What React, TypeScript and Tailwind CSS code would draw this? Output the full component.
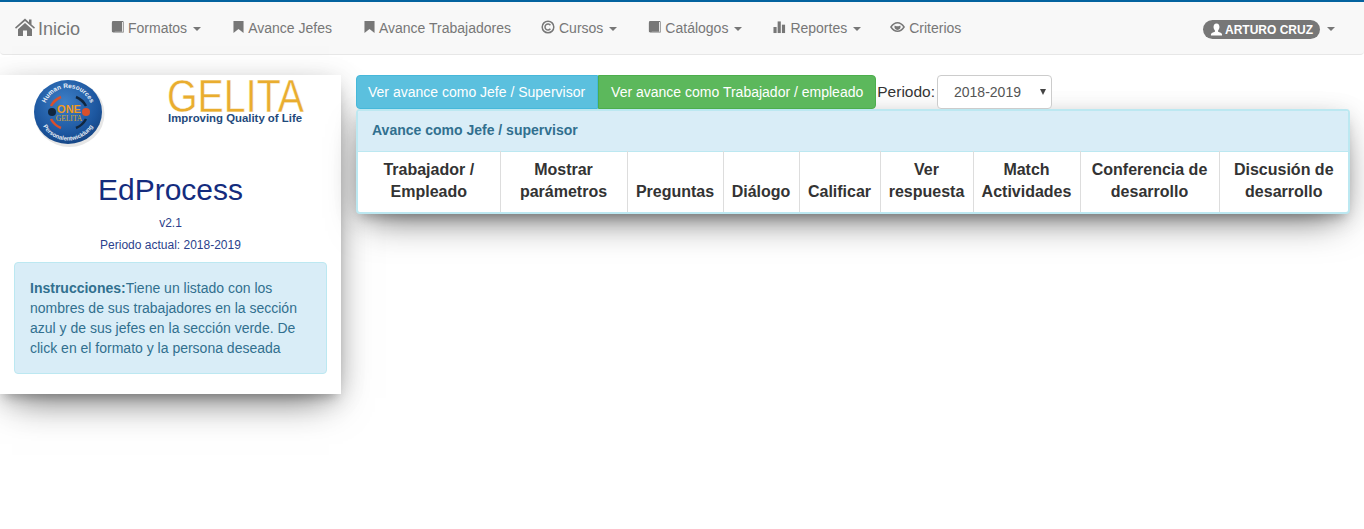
import React from "react";

const Caret = () => (
  <span className="ml-[6px] inline-block h-0 w-0 border-x-4 border-t-4 border-x-transparent border-t-[#777] align-middle" />
);

const Book = () => (
  <svg viewBox="0 0 14 14" className="mr-[4px] inline-block h-[14px] w-[13px] align-[-1px]" fill="#777">
    <path d="M3 0.5h10v1H4v10.5h9v-11h0.7V13H3.2C1.8 13 1 12.2 1 11V2.5C1 1.2 1.8 0.5 3 0.5z" />
    <path d="M1 2.5C1 1.2 1.8.6 3 .6h9V12H3c-1 0-2 .3-2 1z" />
  </svg>
);
const Mark = () => (
  <svg viewBox="0 0 12 14" className="mr-[4px] inline-block h-[14px] w-[11px] align-[-1px]" fill="#777">
    <path d="M0.5 0.5h11v13L6 9.2 0.5 13.500z" />
  </svg>
);
const Copy = () => (
  <svg viewBox="0 0 14 14" className="mr-[4px] inline-block h-[14px] w-[14px] align-[-1px]" fill="none" stroke="#777">
    <circle cx="7" cy="7" r="5.8" strokeWidth="1.5" />
    <path d="M9.4 5.2A3 3 0 1 0 9.4 8.8" strokeWidth="1.5" />
  </svg>
);
const Bars = () => (
  <svg viewBox="0 0 14 14" className="mr-[4px] inline-block h-[14px] w-[13px] align-[-1px]" fill="#777">
    <rect x="0.5" y="7" width="3.4" height="6.5" />
    <rect x="5" y="1" width="3.4" height="12.5" />
    <rect x="9.6" y="4.5" width="3.4" height="9" />
  </svg>
);
const Eye = () => (
  <svg viewBox="0 0 16 14" className="mr-[4px] inline-block h-[14px] w-[15px] align-[-1px]" fill="none" stroke="#777">
    <path d="M1 7c2-3 4.300-4.500 7-4.500S13 4 15 7c-2 3-4.300 4.500-7 4.500S3 10 1 7z" strokeWidth="1.6" />
    <path d="M5 5.500a3.300 3.300 0 1 0 6 0c-1 1-5 1-6 0z" fill="#777" stroke="none" />
  </svg>
);
const Home = () => (
  <svg viewBox="0 0 20 18" className="mr-[3px] inline-block h-[18px] w-[20px] align-[-1px]" fill="#777">
    <path d="M10 0.500 0 9.500l1 1.200L10 3l9 7.700 1-1.200-3.500-3V1.500h-2.500v2.800z" />
    <path d="M3 11.300 10 5l7 6.300V18h-5v-5.500H8V18H3z" />
  </svg>
);
const User = () => (
  <svg viewBox="0 0 14 14" className="mr-[2px] inline-block h-[13px] w-[13px] align-[-2px]" fill="#fff">
    <path d="M7 0.500c2.200 0 3.200 1.700 3.200 3.800 0 1.700-.8 3-1.500 3.700v1.300c1.800.6 4.300 1.300 4.300 3.200V13.500H1v-1c0-1.900 2.500-2.600 4.300-3.200V8C4.600 7.300 3.800 6 3.800 4.300 3.800 2.200 4.800 0.500 7 0.500z" />
  </svg>
);

const Item = ({ icon, label, caret, pad = "pr-[15px]" }: { icon: React.ReactNode; label: string; caret?: boolean; pad?: string }) => (
  <a className={`block whitespace-nowrap pl-[15px] text-[14px] leading-[20px] text-[#777] ${pad}`}>
    {icon}
    {label}
    {caret && <Caret />}
  </a>
);

const OneLogo = () => (
  <svg viewBox="0 0 72 70" className="h-[70px] w-[72px]">
    <defs>
      <radialGradient id="blue" cx="45%" cy="35%" r="70%">
        <stop offset="0%" stopColor="#3d7fc7" />
        <stop offset="70%" stopColor="#1c569f" />
        <stop offset="100%" stopColor="#14427f" />
      </radialGradient>
      <path id="arcTop" d="M11 33a24 24 0 0 1 48 0" />
      <path id="arcBot" d="M6 33a29 28.500 0 0 0 58 0" />
    </defs>
    <ellipse cx="36.500" cy="35" rx="35" ry="33" fill="#d5d5d5" opacity="0.6" />
    <ellipse cx="35" cy="33" rx="34" ry="32" fill="url(#blue)" />
    <text fontFamily="'Liberation Sans', Arial, sans-serif" fontSize="6.500" fontWeight="700" fill="#fff" opacity="0.9">
      <textPath href="#arcTop" startOffset="50%" textAnchor="middle">Human Resources</textPath>
    </text>
    <text fontFamily="'Liberation Sans', Arial, sans-serif" fontSize="6" fontWeight="700" fill="#fff" opacity="0.9">
      <textPath href="#arcBot" startOffset="50%" textAnchor="middle">Personalentwicklung</textPath>
    </text>
    <path d="M18 27a20 20 0 0 1 10-9M18 40a20 20 0 0 0 10 9" fill="none" stroke="#d9502c" strokeWidth="2.500" />
    <path d="M43 18a20 20 0 0 1 10 9M43 49a20 20 0 0 0 10-9" fill="none" stroke="#10263f" strokeWidth="2.500" />
    <circle cx="19" cy="33" r="4" fill="#10263f" />
    <circle cx="53" cy="33" r="4" fill="#d9502c" />
    <text x="36" y="34" textAnchor="middle" fontFamily="'Liberation Sans', Arial, sans-serif" fontSize="11" fontWeight="700" fill="#f39a1c">ONE</text>
    <text x="36" y="42" textAnchor="middle" fontFamily="'Liberation Serif', serif" fontSize="7.500" fill="#d9a632">GELITA</text>
  </svg>
);

const GelitaLogo = () => (
  <svg viewBox="0 0 136 48" className="h-[48px] w-[136px] overflow-visible">
    <text x="-2" y="33" fontFamily="'Liberation Sans', Arial, sans-serif" fontSize="46" fill="#e9ad2f" stroke="#fff" strokeWidth="0.4" textLength="137" lengthAdjust="spacingAndGlyphs">GELITA</text>
    <text x="-1" y="43" fontFamily="'Liberation Sans', Arial, sans-serif" fontSize="11" fontWeight="700" fill="#1f4a7c" textLength="134" lengthAdjust="spacingAndGlyphs">Improving Quality of Life</text>
  </svg>
);

const headers = [
  { lines: ["Trabajador /", "Empleado"], w: "w-[142px]" },
  { lines: ["Mostrar", "parámetros"], w: "w-[127px]" },
  { lines: ["Preguntas"], w: "w-[96px]" },
  { lines: ["Diálogo"], w: "w-[76px]" },
  { lines: ["Calificar"], w: "w-[81px]" },
  { lines: ["Ver", "respuesta"], w: "w-[93px]" },
  { lines: ["Match", "Actividades"], w: "w-[107px]" },
  { lines: ["Conferencia de", "desarrollo"], w: "w-[139px]" },
  { lines: ["Discusión de", "desarrollo"], w: "w-[129px]" },
];

export default function App() {
  return (
    <div className="min-h-[529px] bg-white font-['Liberation_Sans',Arial,sans-serif] text-[14px] leading-[20px] text-[#333]">
      <nav className="flex h-[55px] items-center justify-between rounded-b-[4px] border-t-2 border-b border-t-[#04639f] border-b-[#e7e7e7] bg-[#f8f8f8]">
        <div className="flex items-center">
          <a className="block w-[96px] whitespace-nowrap pl-[15px] text-[18px] leading-[20px] text-[#777]">
            <Home />
            Inicio
          </a>
          <Item icon={<Book />} label="Formatos" caret pad="pr-[17px]" />
          <Item icon={<Mark />} label="Avance Jefes" pad="pr-[17px]" />
          <Item icon={<Mark />} label="Avance Trabajadores" />
          <Item icon={<Copy />} label="Cursos" caret pad="pr-[16px]" />
          <Item icon={<Book />} label="Catálogos" caret pad="pr-[16px]" />
          <Item icon={<Bars />} label="Reportes" caret pad="pr-[14px]" />
          <Item icon={<Eye />} label="Criterios" />
        </div>
        <div className="mt-[3px] flex items-center pr-[29px]">
          <span className="flex h-[19px] items-center rounded-[10px] bg-[#777] px-[7px] text-[12px] font-bold leading-[12px] text-white">
            <User />
            ARTURO CRUZ
          </span>
          <span className="ml-[1px] -mt-[1px] flex">
            <Caret />
          </span>
        </div>
      </nav>

      <div className="mt-[20px] flex items-start gap-[15px] pr-[14px]">
        <aside className="h-[319px] w-[341px] shrink-0 bg-white px-[14px] text-center shadow-[0_16px_38px_-12px_rgba(0,0,0,0.56),0_4px_25px_0_rgba(0,0,0,0.12),0_8px_10px_-5px_rgba(0,0,0,0.2)]">
          <div className="flex h-[76px] items-start pl-[19px] pt-[4px]">
            <OneLogo />
            <div className="ml-[64px]">
              <GelitaLogo />
            </div>
          </div>
          <h1 className="mt-[22px] text-[30px] font-normal leading-[33px] text-[#142c7e]">EdProcess</h1>
          <p className="mt-[9px] text-[12px] leading-[17px] text-[#2b3f8c]">v2.1</p>
          <p className="mt-[5px] text-[12px] leading-[17px] text-[#2b3f8c]">Periodo actual: 2018-2019</p>
          <div className="mt-[8px] h-[112px] rounded-[4px] border border-[#bce8f1] bg-[#d9edf7] p-[15px] text-left text-[#31708f]">
            <b>Instrucciones:</b>Tiene un listado con los nombres de sus trabajadores en la sección azul y de sus jefes en la sección verde. De click en el formato y la persona deseada
          </div>
        </aside>

        <main className="min-w-0 flex-1">
          <div className="flex h-[34px] items-center">
            <a className="flex h-[34px] items-center rounded-l-[4px] border border-[#46b8da] bg-[#5bc0de] pl-[11px] pr-[12px] whitespace-nowrap text-white">
              Ver avance como Jefe / Supervisor
            </a>
            <a className="flex h-[34px] items-center rounded-r-[4px] border border-[#4cae4c] bg-[#5cb85c] px-[12px] whitespace-nowrap text-white">
              Ver avance como Trabajador / empleado
            </a>
            <label className="ml-[1px] text-[15.5px]">Periodo:</label>
            <div className="relative ml-[2px] h-[34px] w-[115px]">
              <select className="h-[34px] w-[115px] appearance-none rounded-[4px] border border-[#ccc] bg-white pl-[16px] text-[14px] text-[#555]">
                <option>2018-2019</option>
              </select>
              <span className="pointer-events-none absolute right-[6px] top-[14px] h-0 w-0 border-x-[3px] border-t-[6px] border-x-transparent border-t-[#444]" />
            </div>
          </div>

          <section className="overflow-hidden rounded-[4px] border-2 border-[#bce8f1] bg-white shadow-[0_16px_38px_-12px_rgba(0,0,0,0.56),0_4px_25px_0_rgba(0,0,0,0.12),0_8px_10px_-5px_rgba(0,0,0,0.2)]">
            <div className="flex h-[40px] items-center bg-[#d9edf7] px-[14px] pb-[2px] text-[14px] font-bold leading-[20px] text-[#31708f]">
              Avance como Jefe / supervisor
            </div>
            <table className="w-full table-fixed border-t border-[#bce8f1]">
              <thead>
                <tr>
                  {headers.map((h, i) => (
                    <th
                      key={i}
                      className={`${h.w} pt-[7px] pb-[9px] text-center align-bottom text-[16px] font-bold leading-[22px] text-[#333] ${i ? "border-l border-[#ddd]" : ""}`}
                    >
                      {h.lines.map((line) => (
                        <div key={line} className="whitespace-nowrap">{line}</div>
                      ))}
                    </th>
                  ))}
                </tr>
              </thead>
            </table>
          </section>
        </main>
      </div>
    </div>
  );
}
